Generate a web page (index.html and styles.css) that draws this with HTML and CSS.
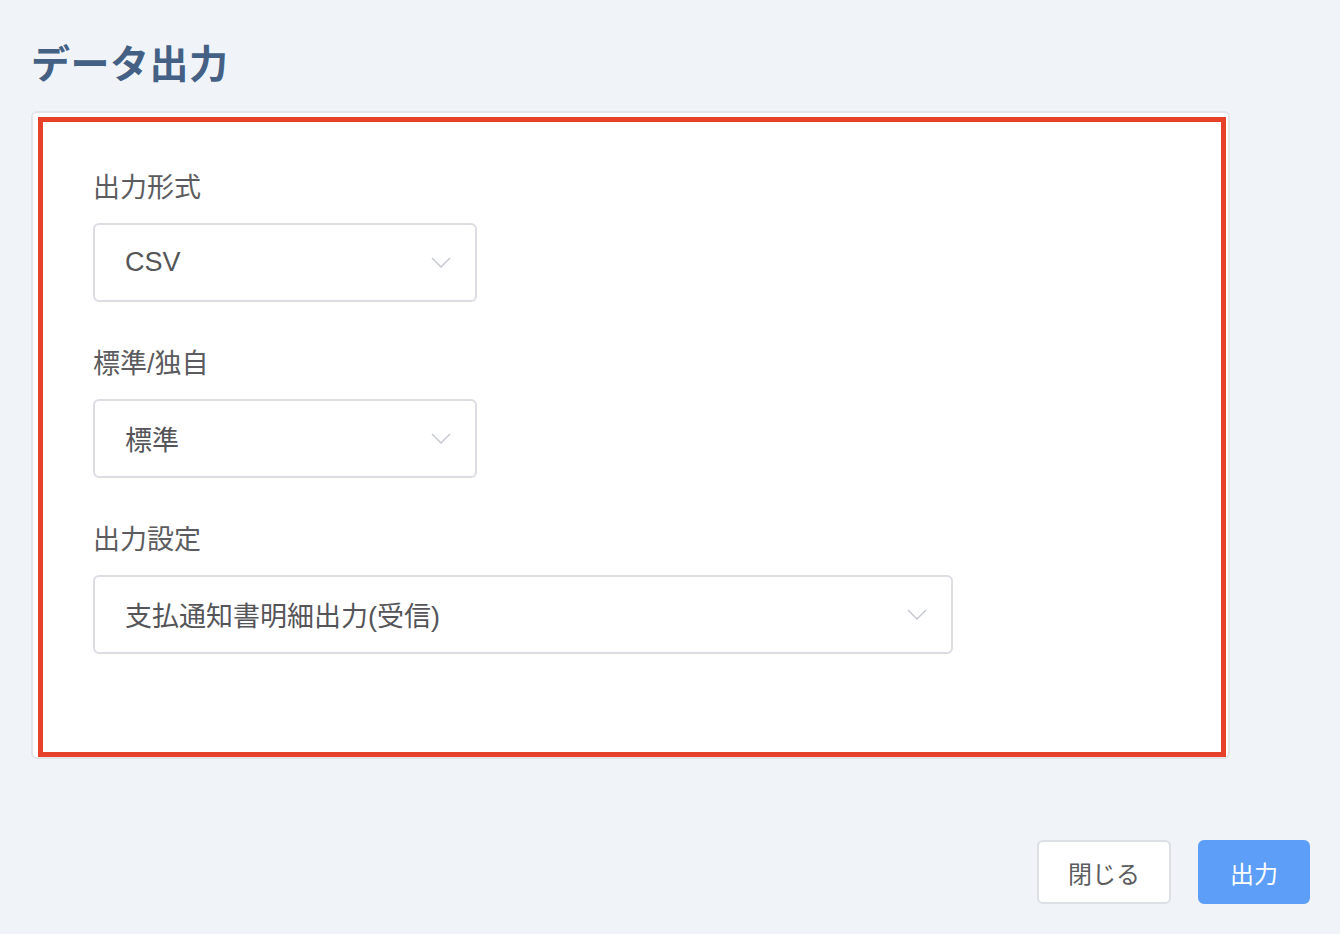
FILE: index.html
```html
<!DOCTYPE html>
<html lang="ja">
<head>
    <meta charset="UTF-8">
    <meta name="viewport" content="width=device-width, initial-scale=1.0">
    <title>データ出力</title>
    <link rel="stylesheet" href="styles.css">
</head>

<body>
    <div class="page">
        <h1 class="page-title">データ出力</h1>

        <div class="card">
            <div class="highlight"></div>
            <div class="form">
                <div class="field">
                    <label class="field-label">出力形式</label>
                    <div class="select small">
                        <span class="select-value">CSV</span>
                        <svg class="chevron" viewBox="0 0 20 11" width="20" height="11"><path d="M1 1 L10 10 L19 1" /></svg>
                    </div>
                </div>

                <div class="field">
                    <label class="field-label">標準/独自</label>
                    <div class="select small">
                        <span class="select-value">標準</span>
                        <svg class="chevron" viewBox="0 0 20 11" width="20" height="11"><path d="M1 1 L10 10 L19 1" /></svg>
                    </div>
                </div>

                <div class="field">
                    <label class="field-label">出力設定</label>
                    <div class="select wide">
                        <span class="select-value">支払通知書明細出力(受信)</span>
                        <svg class="chevron" viewBox="0 0 20 11" width="20" height="11"><path d="M1 1 L10 10 L19 1" /></svg>
                    </div>
                </div>
            </div>
        </div>

        <div class="actions">
            <button class="btn">閉じる</button>
            <button class="btn primary">出力</button>
        </div>
    </div>
</body>
</html>
```

FILE: styles.css
```css
body {
    margin: 0;
    padding: 0;
    background-color: #f0f4f8;
    font-family: 'Liberation Sans', 'Noto Sans CJK JP', sans-serif;
    color: #5a5a5e;
}

.page {
    padding: 0 30px 0 31px;
}

.page-title {
    margin: 0;
    padding-top: 34px;
    font-family: 'Noto Sans CJK JP', sans-serif;
    font-size: 39px;
    line-height: 55px;
    font-weight: 700;
    letter-spacing: 0.5px;
    color: #446185;
}

.card {
    position: relative;
    margin-top: 22px;
    width: 1199px;
    box-sizing: border-box;
    background-color: #fff;
    border: 2px solid #e2e4e8;
    border-radius: 6px;
}

.highlight {
    position: absolute;
    top: 4px;
    left: 5px;
    right: 2px;
    bottom: 0;
    border: 5px solid #e8412a;
    pointer-events: none;
}

.form {
    padding: 57px 60px 103px;
    display: flex;
    flex-direction: column;
    gap: 44px;
}

.field {
    display: flex;
    flex-direction: column;
    gap: 17px;
}

.field-label {
    font-size: 27px;
    line-height: 36px;
    color: #5c5c60;
}

.select {
    height: 79px;
    box-sizing: border-box;
    border: 2px solid #dcdde3;
    border-radius: 6px;
    padding: 0 24px 0 30px;
    display: flex;
    align-items: center;
    justify-content: space-between;
}

.select.small {
    width: 384px;
}

.select.wide {
    width: 860px;
}

.select-value {
    font-size: 27px;
    color: #555559;
}

.chevron {
    fill: none;
    stroke: #c3c6cd;
    stroke-width: 1.4;
}

.actions {
    margin-top: 81px;
    display: flex;
    justify-content: flex-end;
    gap: 27px;
}

.btn {
    width: 134px;
    height: 64px;
    padding: 0;
    font-family: 'Noto Sans CJK JP', sans-serif;
    font-size: 24px;
    color: #5c5c60;
    background-color: #fff;
    border: 2px solid #dcdfe5;
    border-radius: 6px;
}

.btn.primary {
    width: 112px;
    color: #fff;
    background-color: #5c9ef8;
    border-color: #5c9ef8;
}
```
